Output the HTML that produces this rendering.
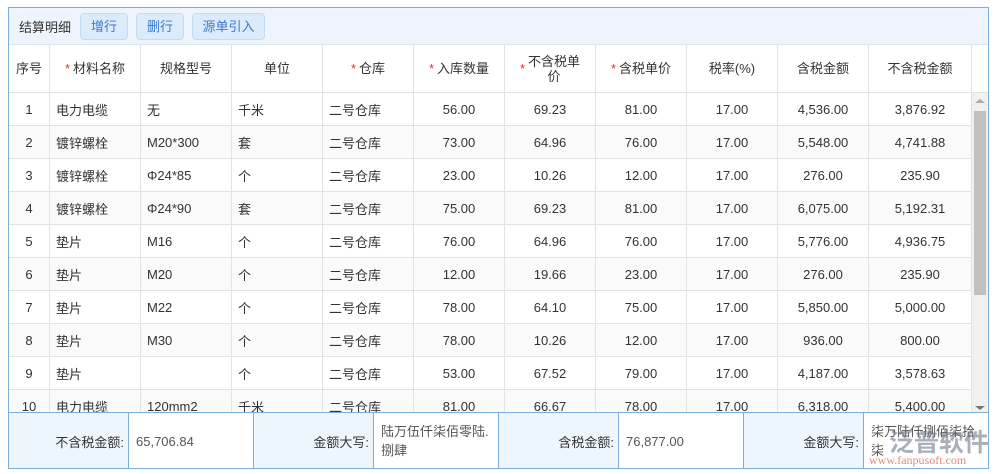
<!DOCTYPE html>
<html><head><meta charset="utf-8">
<style>
*{margin:0;padding:0;box-sizing:border-box}
body{width:995px;height:474px;background:#fff;font-family:"Liberation Sans","Noto Sans CJK SC",sans-serif;font-size:13px;color:#333;position:relative;overflow:hidden}
.abs{position:absolute}
#frame{left:8px;top:7px;width:981px;height:462px;border:1px solid #7aaedc;overflow:hidden}
#tb{left:0;top:0;width:979px;height:37px;background:#eef4fd;border-bottom:1px solid #dde6f0}
.btn{position:absolute;top:5px;height:27px;border:1px solid #c5dcf0;border-radius:4px;background:#dcebfa;color:#3a7ad0;line-height:25px;text-align:center;font-size:13px}
.c{position:absolute;border-right:1px solid #e3e3e3;border-bottom:1px solid #e3e3e3;display:flex;align-items:center;white-space:nowrap;overflow:hidden}
.h{justify-content:center;text-align:center}
.s{color:#f22;margin-right:3px}
.f{position:absolute;top:0;height:56px;border-right:1px solid #7aaedc;display:flex;align-items:center;font-size:13px;overflow:hidden}
.fl{background:#eef6fd;justify-content:flex-end;padding-right:4px}
.fv{padding-left:7px;color:#555;background:#fff}
</style></head><body>
<div id="frame" class="abs">
<div id="tb" class="abs">
<div class="abs" style="left:10px;top:9px;font-size:13px;color:#333">结算明细</div>
<div class="btn" style="left:71px;width:48px">增行</div>
<div class="btn" style="left:127px;width:48px">删行</div>
<div class="btn" style="left:183px;width:73px">源单引入</div>
</div>
<div id="grid" class="abs" style="left:0;top:37px;width:979px;height:368px"></div>
<div class="abs" style="left:963px;top:85px;width:16px;height:320px;background:#f0f0f0"></div>
<div class="abs" style="left:965px;top:103px;width:12px;height:184px;background:#c1c1c1"></div>
<div class="abs" style="left:966px;top:91px;width:0;height:0;border-left:5px solid transparent;border-right:5px solid transparent;border-bottom:4px solid #aaa"></div>
<div class="abs" style="left:966px;top:398px;width:0;height:0;border-left:5px solid transparent;border-right:5px solid transparent;border-top:4px solid #777"></div>
<div class="abs" style="left:0;top:404px;width:979px;height:58px;border-top:1px solid #7aaedc">
<div class="f fl" style="left:0;width:120px">不含税金额:</div>
<div class="f fv" style="left:120px;width:125px">65,706.84</div>
<div class="f fl" style="left:245px;width:120px">金额大写:</div>
<div class="f fv" style="left:365px;width:125px;line-height:19px;white-space:normal;padding-right:4px">陆万伍仟柒佰零陆.捌肆</div>
<div class="f fl" style="left:490px;width:120px">含税金额:</div>
<div class="f fv" style="left:610px;width:125px">76,877.00</div>
<div class="f fl" style="left:735px;width:120px">金额大写:</div>
<div class="f fv" style="left:855px;width:124px;line-height:19px;white-space:normal;border-right:none;padding-right:4px">柒万陆仟捌佰柒拾柒</div>
<div class="abs" style="left:880px;top:10px;font-size:25px;font-weight:bold;color:rgba(100,110,130,0.55);white-space:nowrap">泛普软件</div>
<div class="abs" style="left:860px;top:40px;font-family:'Liberation Serif',serif;font-size:12px;color:rgba(220,110,90,0.8);white-space:nowrap">www.fanpusoft.com</div>
</div>
</div>
<script>
var cols=[0,41,132,223,314,405,496,587,678,769,860,963];
var heads=['序号','<span class=s>*</span>材料名称','规格型号','单位','<span class=s>*</span>仓库','<span class=s>*</span>入库数量','<span class=s>*</span>不含税单<br>价','<span class=s>*</span>含税单价','税率(%)','含税金额','不含税金额'];
var rows=[
['1','电力电缆','无','千米','二号仓库','56.00','69.23','81.00','17.00','4,536.00','3,876.92'],
['2','镀锌螺栓','M20*300','套','二号仓库','73.00','64.96','76.00','17.00','5,548.00','4,741.88'],
['3','镀锌螺栓','Φ24*85','个','二号仓库','23.00','10.26','12.00','17.00','276.00','235.90'],
['4','镀锌螺栓','Φ24*90','套','二号仓库','75.00','69.23','81.00','17.00','6,075.00','5,192.31'],
['5','垫片','M16','个','二号仓库','76.00','64.96','76.00','17.00','5,776.00','4,936.75'],
['6','垫片','M20','个','二号仓库','12.00','19.66','23.00','17.00','276.00','235.90'],
['7','垫片','M22','个','二号仓库','78.00','64.10','75.00','17.00','5,850.00','5,000.00'],
['8','垫片','M30','个','二号仓库','78.00','10.26','12.00','17.00','936.00','800.00'],
['9','垫片','','个','二号仓库','53.00','67.52','79.00','17.00','4,187.00','3,578.63'],
['10','电力电缆','120mm2','千米','二号仓库','81.00','66.67','78.00','17.00','6,318.00','5,400.00']];
var g=document.getElementById('grid'),h='';
for(var i=0;i<11;i++){var w=cols[i+1]-cols[i];
h+='<div class="c h" style="left:'+cols[i]+'px;top:0;width:'+w+'px;height:48px;line-height:15px">'+heads[i]+'</div>';}
h+='<div class="c" style="left:963px;top:0;width:16px;height:48px;border-right:none"></div>';
for(var r=0;r<10;r++){var bg=r%2?'#fafafa':'#fff';for(var i=0;i<11;i++){var w=cols[i+1]-cols[i];var left=(i>=1&&i<=4);
h+='<div class="c" style="left:'+cols[i]+'px;top:'+(48+r*33)+'px;width:'+w+'px;height:33px;background:'+bg+';'+(left?'padding-left:6px':'justify-content:center')+'">'+rows[r][i]+'</div>';}}
g.innerHTML=h;
</script>
</body></html>
